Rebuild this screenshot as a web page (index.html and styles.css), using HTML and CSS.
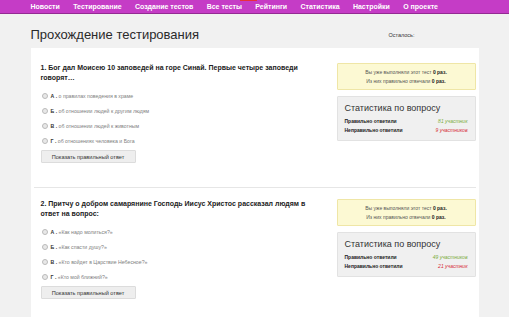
FILE: index.html
```html
<!DOCTYPE html>
<html>
<head>
    <meta charset="utf-8">
    <title>Прохождение тестирования</title>
    <link rel="stylesheet" href="styles.css">
</head>
<body>
    <div class="topbar">
        <div class="nav">
            <a href="#">Новости</a>
            <a href="#">Тестирование</a>
            <a href="#">Создание тестов</a>
            <a href="#">Все тесты</a>
            <a href="#">Рейтинги</a>
            <a href="#">Статистика</a>
            <a href="#">Настройки</a>
            <a href="#">О проекте</a>
        </div>
        <span class="nav-mark"></span>
    </div>

    <div id="container">
        <div class="header">
            <h1>Прохождение тестирования</h1>
            <div class="timer">Осталось:</div>
        </div>

        <div class="panel">
            <div class="question">
                <div class="q-main">
                    <div class="q-title">1. Бог дал Моисею 10 заповедей на горе Синай. Первые четыре заповеди говорят…</div>
                    <div class="option"><span class="radio"></span><b>А .</b>&nbsp;о правилах поведения в храме</div>
                    <div class="option"><span class="radio"></span><b>Б .</b>&nbsp;об отношении людей к другим людям</div>
                    <div class="option"><span class="radio"></span><b>В .</b>&nbsp;об отношении людей к животным</div>
                    <div class="option"><span class="radio"></span><b>Г .</b>&nbsp;об отношениях человека и Бога</div>
                    <button class="show-btn">Показать правильный ответ</button>
                </div>
                <div class="q-side">
                    <div class="notice">
                        <p>Вы уже выполняли этот тест <b>0 раз.</b></p>
                        <p>Из них правильно отвечали <b>0 раз.</b></p>
                    </div>
                    <div class="stats">
                        <div class="stats-title">Статистика по вопросу</div>
                        <div class="stats-row"><b>Правильно ответили</b><span class="good">81 участник</span></div>
                        <div class="stats-row"><b>Неправильно ответили</b><span class="bad">9 участников</span></div>
                    </div>
                </div>
            </div>

            <div class="question">
                <div class="q-main">
                    <div class="q-title">2. Притчу о добром самарянине Господь Иисус Христос рассказал людям в ответ на вопрос:</div>
                    <div class="option"><span class="radio"></span><b>А .</b>&nbsp;«Как надо молиться?»</div>
                    <div class="option"><span class="radio"></span><b>Б .</b>&nbsp;«Как спасти душу?»</div>
                    <div class="option"><span class="radio"></span><b>В .</b>&nbsp;«Кто войдет в Царствие Небесное?»</div>
                    <div class="option"><span class="radio"></span><b>Г .</b>&nbsp;«Кто мой ближний?»</div>
                    <button class="show-btn">Показать правильный ответ</button>
                </div>
                <div class="q-side">
                    <div class="notice">
                        <p>Вы уже выполняли этот тест <b>0 раз.</b></p>
                        <p>Из них правильно отвечали <b>0 раз.</b></p>
                    </div>
                    <div class="stats">
                        <div class="stats-title">Статистика по вопросу</div>
                        <div class="stats-row"><b>Правильно ответили</b><span class="good">49 участников</span></div>
                        <div class="stats-row"><b>Неправильно ответили</b><span class="bad">21 участник</span></div>
                    </div>
                </div>
            </div>
        </div>
    </div>
</body>
</html>
```

FILE: styles.css
```css
body {
    margin: 0;
    background-color: #f1f1f1;
    color: #333;
    font-family: "Liberation Sans", Arial, sans-serif;
}

.topbar {
    position: relative;
    background-color: #c53cc6;
    border-bottom: 1px solid #932a93;
    height: 13px;
}

.nav {
    width: 448px;
    margin: 0 auto;
    display: flex;
    gap: 13.3px;
    line-height: 13px;
}

.nav a {
    color: #fff;
    font-size: 7px;
    font-weight: bold;
    text-decoration: none;
}

.nav-mark {
    position: absolute;
    left: 240px;
    top: 0;
    width: 17px;
    height: 1px;
    background-color: #e8303c;
}

#container {
    width: 448px;
    margin: 0 auto;
}

.header {
    display: flex;
    align-items: center;
    height: 27px;
    padding-top: 7px;
}

.header h1 {
    flex: 1;
    margin: 0;
    font-size: 13px;
    font-weight: normal;
    color: #2a2a2a;
}

.timer {
    width: 90px;
    font-size: 5.5px;
    color: #333;
}

.panel {
    background-color: #fff;
    padding-top: 4px;
}

.question {
    display: flex;
    gap: 16px;
    margin: 0 3px;
    padding: 11px 0 24px 7px;
    border-bottom: 1px solid #e6e6e6;
}

.q-main {
    width: 280px;
}

.q-title {
    font-size: 7px;
    font-weight: bold;
    line-height: 10px;
    color: #222;
    margin-bottom: 5px;
}

.option {
    display: flex;
    align-items: center;
    height: 15px;
    font-size: 5.2px;
    color: #808080;
}

.option b {
    color: #333;
}

.radio {
    width: 4px;
    height: 4px;
    margin: 0 3px 0 1px;
    border: 0.5px solid #bbb;
    border-radius: 50%;
    background-color: #e8e8e8;
}

.show-btn {
    display: block;
    margin-top: 2px;
    width: 95px;
    height: 13px;
    padding: 0;
    border: 1px solid #dcdcdc;
    border-radius: 1px;
    background-color: #eee;
    color: #333;
    font-family: inherit;
    font-size: 5.6px;
}

.q-side {
    width: 139px;
}

.notice {
    background-color: #fcf9d3;
    border: 1px solid #efe6a6;
    border-radius: 1px;
    padding: 3.5px 0;
    text-align: center;
    font-size: 5px;
    color: #555;
}

.notice p {
    margin: 0;
    line-height: 9px;
}

.notice b {
    color: #222;
}

.stats {
    margin-top: 6px;
    background-color: #f0f0f0;
    border: 1px solid #e2e2e2;
    border-radius: 1px;
    padding: 5px 7px;
}

.stats-title {
    font-size: 9px;
    line-height: 12px;
    color: #333;
    margin-bottom: 3px;
}

.stats-row {
    display: flex;
    justify-content: space-between;
    font-size: 5px;
    line-height: 9px;
    color: #222;
}

.good {
    color: #7aac3c;
    font-style: italic;
}

.bad {
    color: #d62a36;
    font-style: italic;
}
```
